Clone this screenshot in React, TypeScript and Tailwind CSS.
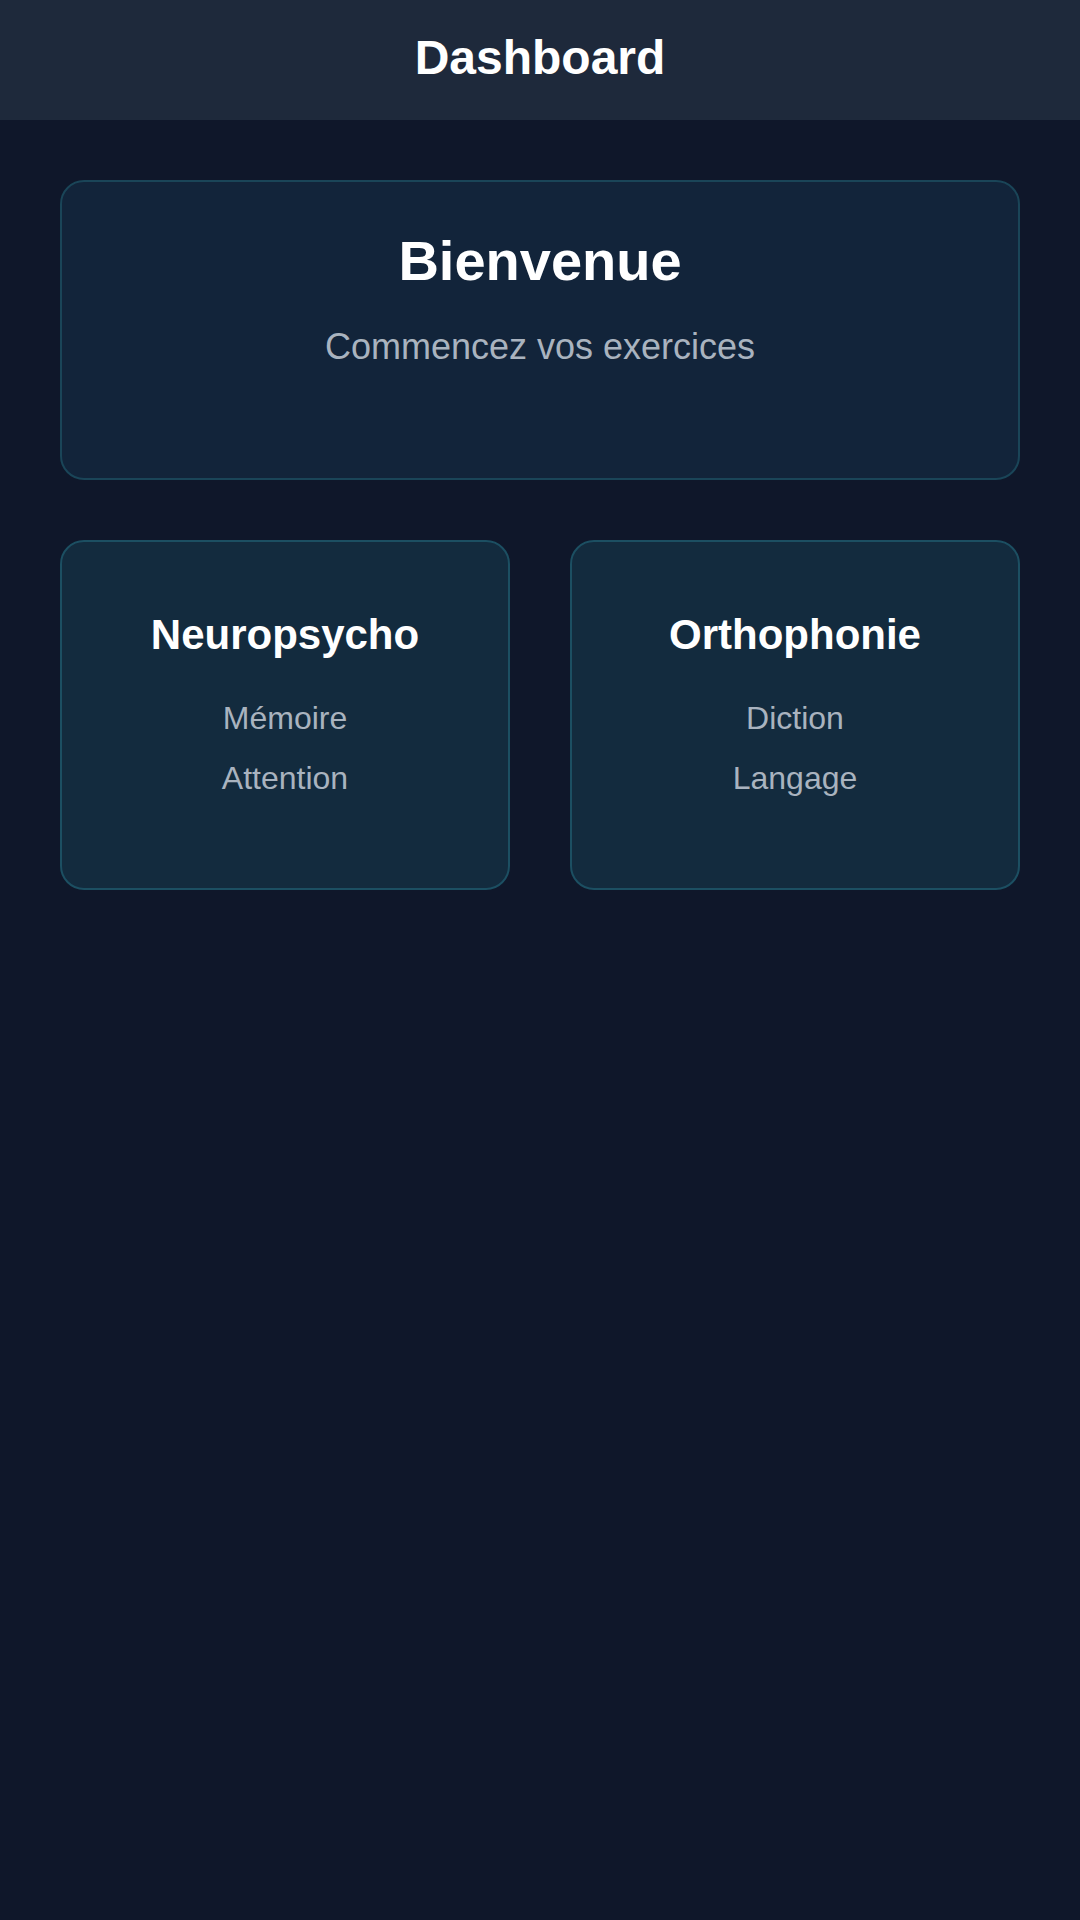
const modules = [
    {
        title: "Neuropsycho",
        items: ["Mémoire", "Attention"]
    },
    {
        title: "Orthophonie",
        items: ["Diction", "Langage"]
    }
]

export default function App() {
    return (
        <div className="min-h-[1920px] w-full bg-[#0f172a] font-['Liberation_Sans',Arial,sans-serif]">
            <header className="h-[120px] w-full bg-[#1e293b] flex items-center justify-center pb-[4px]">
                <h1 className="text-[48px] leading-none font-bold text-white">Dashboard</h1>
            </header>

            <main className="px-[60px] pt-[60px] flex flex-col gap-[60px]">
                <section className="h-[300px] rounded-[24px] border-2 border-[#1a4558] bg-[#12243a] pt-[51px] flex flex-col items-center">
                    <h2 className="text-[56px] leading-none font-bold text-white">Bienvenue</h2>
                    <p className="mt-[40px] text-[36px] leading-none text-[#a9b3bf]">Commencez vos exercices</p>
                </section>

                <div className="grid grid-cols-2 gap-[60px]">
                    {modules.map((mod) => (
                        <div
                            key={mod.title}
                            className="h-[350px] rounded-[24px] border-2 border-[#1c4f62] bg-[#132b3e] pt-[72px] flex flex-col items-center"
                        >
                            <h3 className="text-[42px] leading-none font-bold text-white">{mod.title}</h3>
                            <div className="mt-[46px] flex flex-col items-center gap-[28px]">
                                {mod.items.map((item) => (
                                    <span key={item} className="text-[32px] leading-none text-[#a9b3bf]">{item}</span>
                                ))}
                            </div>
                        </div>
                    ))}
                </div>
            </main>
        </div>
    );
}
